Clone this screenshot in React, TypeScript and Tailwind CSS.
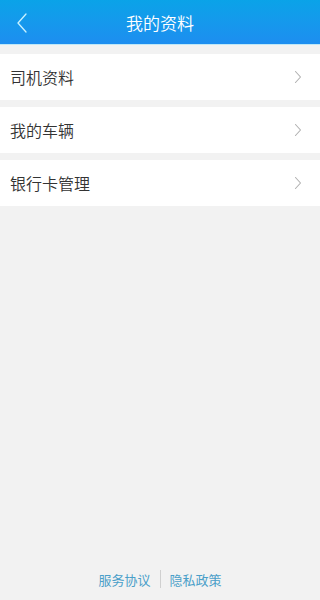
import React from "react";

const font = { fontFamily: '"Noto Sans CJK SC", "Noto Sans", sans-serif' };

function Chevron() {
  return (
    <svg width="8" height="14" viewBox="0 0 8 14" fill="none">
      <path d="M1.5 1.5 L6.5 7 L1.5 12.5" stroke="#b0b0b0" strokeWidth="1.1" strokeLinecap="round" strokeLinejoin="round" />
    </svg>
  );
}

function Row({ label }: { label: string }) {
  return (
    <div className="h-[46px] bg-white flex items-center justify-between pl-[10px] pr-[18px]">
      <span className="text-[16px] text-[#333333] leading-none font-[350]">{label}</span>
      <Chevron />
    </div>
  );
}

export default function App() {
  return (
    <div className="w-[320px] h-[600px] bg-[#f2f2f2] flex flex-col" style={font}>
      <div className="h-[45px] shrink-0 bg-gradient-to-b from-[#0aa3e8] to-[#1d8ef0] border-b border-[#bfe8f7] relative flex items-center justify-center">
        <svg className="absolute left-[16px] top-[13px]" width="12" height="20" viewBox="0 0 12 20" fill="none">
          <path d="M10 1 L2 10 L10 19" stroke="#c9f2ff" strokeWidth="1.3" strokeLinecap="round" strokeLinejoin="round" />
        </svg>
        <span className="text-white text-[17px] leading-none font-[350]">我的资料</span>
      </div>
      <div className="flex flex-col gap-[7px] pt-[9px]">
        <Row label="司机资料" />
        <Row label="我的车辆" />
        <Row label="银行卡管理" />
      </div>
      <div className="flex-1" />
      <div className="h-[40px] flex items-center justify-center mb-[1px]">
        <span className="text-[13px] text-[#4a9fc9] leading-none">服务协议</span>
        <span className="mx-[9px] w-px h-[18px] bg-[#d0d0d0]" />
        <span className="text-[13px] text-[#4a9fc9] leading-none">隐私政策</span>
      </div>
    </div>
  );
}
